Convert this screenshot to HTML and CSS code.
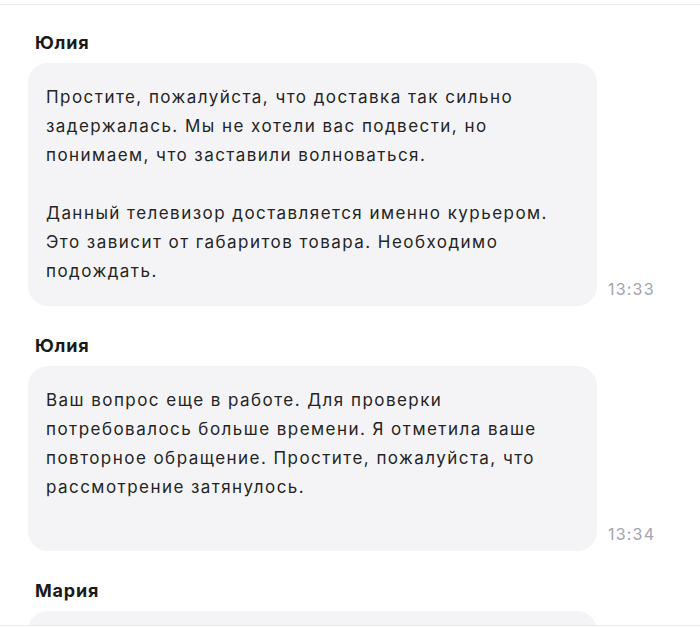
FILE: index.html
```html
<!DOCTYPE html>
<html lang="ru">
<head>
<meta charset="utf-8">
<link rel="stylesheet" href="styles.css">
</head>
<body>
<div class="chat">
  <div class="group">
    <div class="author">Юлия</div>
    <div class="row">
      <div class="bubble">Простите, пожалуйста, что доставка так сильно задержалась. Мы не хотели вас подвести, но понимаем, что заставили волноваться.<br><br>Данный телевизор доставляется именно курьером. Это зависит от габаритов товара. Необходимо подождать.</div>
      <div class="time">13:33</div>
    </div>
  </div>
  <div class="group">
    <div class="author">Юлия</div>
    <div class="row">
      <div class="bubble">Ваш вопрос еще в работе. Для проверки потребовалось больше времени. Я отметила ваше повторное обращение. Простите, пожалуйста, что рассмотрение затянулось.<br><br></div>
      <div class="time">13:34</div>
    </div>
  </div>
  <div class="group">
    <div class="author">Мария</div>
    <div class="row">
      <div class="bubble bubble-empty"></div>
    </div>
  </div>
</div>
</body>
</html>
```

FILE: styles.css
```css
html, body {
  margin: 0;
  padding: 0;
  background: #ffffff;
}
body {
  font-family: Inter, "Noto Sans", sans-serif;
  color: #242424;
}
.chat {
  margin-top: 4px;
  height: 594px;
  border-top: 1px solid #e8e8f0;
  border-bottom: 1px solid #e8e8f0;
  overflow: hidden;
  padding: 26px 0 0 28px;
}
.group {
  margin-bottom: 28px;
}
.author {
  padding-left: 7px;
  font-size: 18px;
  line-height: 24px;
  font-weight: 700;
  letter-spacing: 0.8px;
  color: #1a1a1a;
  margin-bottom: 8px;
}
.row {
  display: flex;
  align-items: flex-end;
}
.bubble {
  width: 533px;
  padding: 20px 18px;
  background: #f4f4f6;
  border-radius: 20px;
  font-size: 17px;
  line-height: 29px;
  letter-spacing: 1.45px;
}
.bubble-empty {
  height: 60px;
}
.time {
  margin-left: 11px;
  margin-bottom: 7px;
  font-size: 16px;
  line-height: 20px;
  letter-spacing: 1.2px;
  color: #a2a5ad;
}
```
